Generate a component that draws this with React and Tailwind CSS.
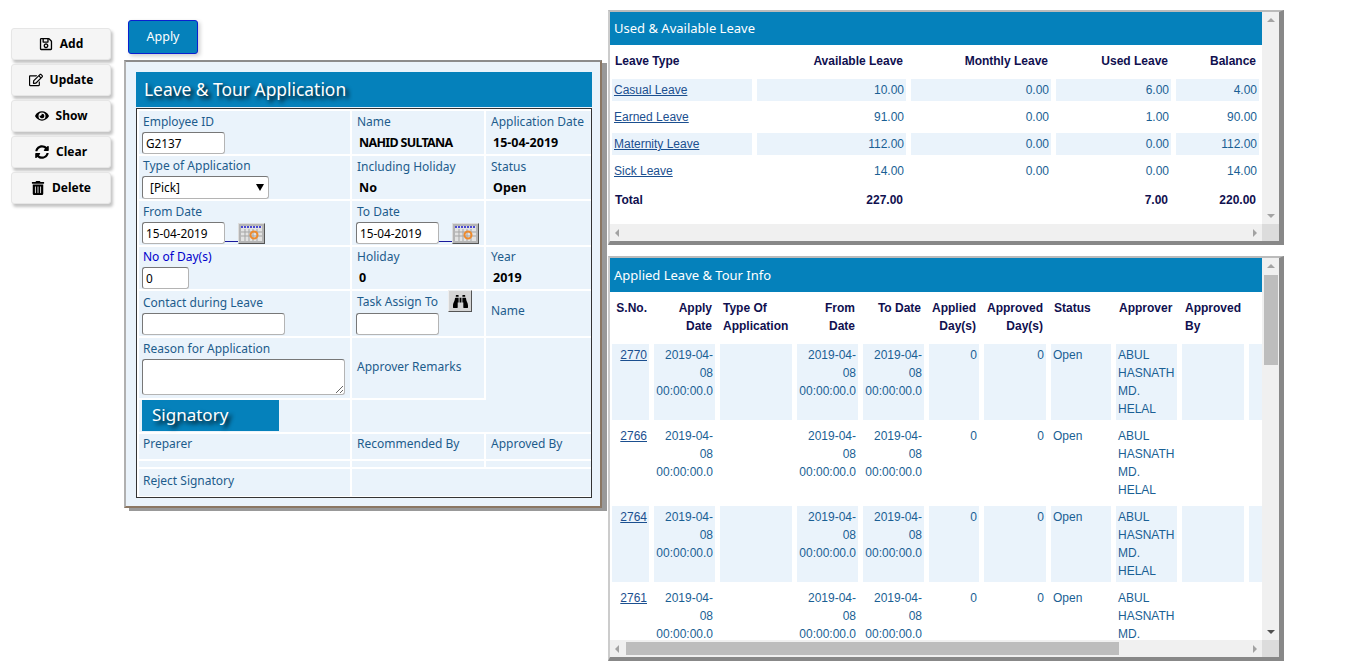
import { FaBinoculars, FaEye, FaRegEdit, FaRegSave, FaSyncAlt, FaTrashAlt } from "react-icons/fa";

const segoe = "font-['Noto_Sans',sans-serif]";

const actions = [
  { label: "Add", icon: FaRegSave },
  { label: "Update", icon: FaRegEdit },
  { label: "Show", icon: FaEye },
  { label: "Clear", icon: FaSyncAlt },
  { label: "Delete", icon: FaTrashAlt },
];

const leaveRows = [
  ["Casual Leave", "10.00", "0.00", "6.00", "4.00"],
  ["Earned Leave", "91.00", "0.00", "1.00", "90.00"],
  ["Maternity Leave", "112.00", "0.00", "0.00", "112.00"],
  ["Sick Leave", "14.00", "0.00", "0.00", "14.00"],
];

// last row runs under the scrollbar, its final word is out of view
const appliedRows = [
  ["2770", "ABUL HASNATH MD. HELAL"],
  ["2766", "ABUL HASNATH MD. HELAL"],
  ["2764", "ABUL HASNATH MD. HELAL"],
  ["2761", "ABUL HASNATH MD."],
];
const stamp = "2019-04-08 00:00:00.0";

function Label({ children, className = "" }) {
  return <div className={`ml-px h-[20px] leading-[20px] text-[12px] whitespace-nowrap text-[#1d5c8c] ${className}`}>{children}</div>;
}

function Value({ children, className = "" }) {
  return <div className={`ml-[3px] h-[20px] leading-[20px] text-[12.5px] font-bold whitespace-nowrap text-black ${className}`}>{children}</div>;
}

function TextBox({ value = "", className = "" }) {
  return (
    <input
      readOnly
      value={value}
      className={`block h-[22px] rounded-[3px] border border-[#b4b4b4] border-t-[#777] border-l-[#777] bg-white px-[3px] font-['Noto_Sans',sans-serif] text-[11.8px] text-black outline-none ${className}`}
    />
  );
}

function DateField() {
  return (
    <div className="flex items-end">
      <TextBox value="15-04-2019" className="w-[83px]" />
      <div className="mb-[2px] h-px w-[13px] bg-[#1a1a9c]" />
      <div className="flex h-[21px] w-[27px] items-center justify-center border border-[#555] border-t-[#ddd] border-l-[#ddd] bg-[#b5b5b5]">
        <svg width="21" height="15" viewBox="0 0 21 15">
          <rect width="21" height="15" fill="#e2e2e2" />
          <path d="M0 1h21" stroke="#4a4ad0" strokeWidth="2" strokeDasharray="2 1" />
          <path d="M4 3v12M8 3v12M12 3v12M16 3v12M0 6h21M0 10h21" stroke="#a5a5a5" strokeWidth="1" />
          <circle cx="13" cy="9" r="3.5" fill="none" stroke="#ee8a2c" strokeWidth="2" />
        </svg>
      </div>
    </div>
  );
}

function Thumb({ className }) {
  return <div className={`shrink-0 bg-[#bdbdbd] ${className}`} />;
}

function ArrowUp() {
  return <div className="h-0 w-0 border-x-[4px] border-b-[4px] border-x-transparent border-b-[#a3a3a3]" />;
}

function ArrowDown({ dark }) {
  return <div className={`h-0 w-0 border-x-[4px] border-t-[4px] border-x-transparent ${dark ? "border-t-[#505050]" : "border-t-[#a3a3a3]"}`} />;
}

function ArrowLeft() {
  return <div className="h-0 w-0 border-y-[4px] border-r-[4px] border-y-transparent border-r-[#a3a3a3]" />;
}

function ArrowRight() {
  return <div className="h-0 w-0 border-y-[4px] border-l-[4px] border-y-transparent border-l-[#a3a3a3]" />;
}

function LeaveForm() {
  const tdFirst = "border-2 border-white p-0 pl-[3px] align-top";
  const td = "border-2 border-white p-0 pl-[4px] align-top";
  return (
    <div className={`${segoe} h-[448px] w-[478px] border-t-2 border-l-2 border-r-2 border-b-2 border-t-[#8c8c8c] border-r-[#8b7763] border-b-[#8b7763] border-l-[#b0b0b0] bg-[#eaf3fb] pt-[10px] pr-[8px] pl-[10px] shadow-[5px_3px_0_#999]`}>
      <div className="flex h-[35px] items-center bg-[#0581bb] pb-px pl-[8px] text-[17.4px] text-white [text-shadow:3px_3px_4px_#000]">
        Leave &amp; Tour Application
      </div>
      <div className="mt-px h-[390px] overflow-hidden border border-[#333]">
        <table className="w-[454px] table-fixed border-collapse">
          <colgroup>
            <col className="w-[213px]" />
            <col className="w-[134px]" />
            <col className="w-[107px]" />
          </colgroup>
          <tbody>
            <tr className="h-[45px]">
              <td className={tdFirst}>
                <Label className="mt-px">Employee ID</Label>
                <TextBox value="G2137" className="w-[83px]" />
              </td>
              <td className={td}>
                <Label className="mt-px">Name</Label>
                <Value className="mt-px tracking-[-0.7px]">NAHID SULTANA</Value>
              </td>
              <td className={td}>
                <Label className="mt-px">Application Date</Label>
                <Value className="mt-px">15-04-2019</Value>
              </td>
            </tr>
            <tr className="h-[45px]">
              <td className={tdFirst}>
                <Label>Type of Application</Label>
                <div className="relative w-[127px]">
                  <select className="block h-[23px] w-full appearance-none rounded-[3px] border border-[#b4b4b4] border-t-[#777] border-l-[#777] bg-white pl-[7px] font-['Noto_Sans',sans-serif] text-[11.8px] text-black">
                    <option>[Pick]</option>
                  </select>
                  <div className="absolute top-[8px] right-[5px] h-0 w-0 border-x-[4px] border-t-[7px] border-x-transparent border-t-black" />
                </div>
              </td>
              <td className={td}>
                <Label className="mt-px">Including Holiday</Label>
                <Value className="mt-px">No</Value>
              </td>
              <td className={td}>
                <Label className="mt-px">Status</Label>
                <Value className="mt-px">Open</Value>
              </td>
            </tr>
            <tr className="h-[46px]">
              <td className={tdFirst}>
                <Label className="mt-px">From Date</Label>
                <DateField />
              </td>
              <td className={td}>
                <Label className="mt-px">To Date</Label>
                <DateField />
              </td>
              <td className={td} />
            </tr>
            <tr className="h-[44px]">
              <td className={tdFirst}>
                <Label className="!text-[#0000cc]">No of Day(s)</Label>
                <TextBox value="0" className="w-[47px]" />
              </td>
              <td className={td}>
                <Label>Holiday</Label>
                <Value className="mt-px">0</Value>
              </td>
              <td className={td}>
                <Label>Year</Label>
                <Value className="mt-px">2019</Value>
              </td>
            </tr>
            <tr className="h-[47px]">
              <td className={tdFirst}>
                <Label className="mt-[2px]">Contact during Leave</Label>
                <TextBox className="w-[143px]" />
              </td>
              <td className={td}>
                <div className="flex items-start justify-between pr-[12px]">
                  <Label className="mt-px">Task Assign To</Label>
                  <div className="-mt-px flex h-[22px] w-[24px] items-center justify-center border border-[#555] border-t-[#eee] border-l-[#eee] bg-[#d4d4d4]">
                    <FaBinoculars className="text-[15px] text-black" />
                  </div>
                </div>
                <TextBox className="mt-px w-[83px]" />
              </td>
              <td className={`${td} pt-[10px]`}>
                <Label>Name</Label>
              </td>
            </tr>
            <tr className="h-[62px]">
              <td className={tdFirst}>
                <Label className="mt-px">Reason for Application</Label>
                <textarea
                  readOnly
                  className="block h-[36px] w-[203px] rounded-[3px] border border-[#b4b4b4] border-t-[#777] border-l-[#777] bg-white"
                />
              </td>
              <td className={`${td} pt-[19px]`}>
                <Label>Approver Remarks</Label>
              </td>
              <td className="border-2 border-b-0 border-white p-0" />
            </tr>
            <tr className="h-[34px]">
              <td className={tdFirst}>
                <div className="flex h-[31px] w-[137px] items-center bg-[#0581bb] pb-[2px] pl-[10px] text-[17px] text-white [text-shadow:3px_3px_4px_#000]">
                  Signatory
                </div>
              </td>
              <td className="border-2 border-r-0 border-white p-0" />
              <td className="border-r-2 border-b-2 border-white p-0" />
            </tr>
            <tr className="h-[27px]">
              <td className={tdFirst}>
                <Label>Preparer</Label>
              </td>
              <td className={td}>
                <Label>Recommended By</Label>
              </td>
              <td className={td}>
                <Label>Approved By</Label>
              </td>
            </tr>
            <tr className="h-[8px]">
              <td className="border-2 border-white p-0" />
              <td className="border-2 border-white p-0" />
              <td className="border-2 border-white p-0" />
            </tr>
            <tr className="h-[29px]">
              <td className={tdFirst}>
                <Label className="mt-[2px]">Reject Signatory</Label>
              </td>
              <td className="border-2 border-white p-0" colSpan={2} />
            </tr>
          </tbody>
        </table>
      </div>
    </div>
  );
}

function UsedLeave() {
  const cols = "grid grid-cols-[140px_149px_140px_115px_83px] gap-x-[5px] pl-[2px]";
  const heads = ["Available Leave", "Monthly Leave", "Used Leave", "Balance"];
  return (
    <div className="flex h-[235px] w-[676px] flex-col border-t-2 border-r-[5px] border-b-[4px] border-l-2 border-t-[#bbb] border-r-[#888] border-b-[#888] border-l-[#ccc] bg-white font-['Liberation_Sans',sans-serif] text-[12px]">
      <div className="flex min-h-0 flex-1">
        <div className="w-[652px] overflow-hidden">
          <div className={`${segoe} flex h-[33px] items-center bg-[#0581bb] pl-[4px] text-[13px] text-white`}>Used &amp; Available Leave</div>
          <div className={`${cols} h-[34px] items-center pb-[2px] font-bold text-[#10104f]`}>
            <div className="pl-[3px]">Leave Type</div>
            {heads.map((h) => (
              <div key={h} className="pr-[3px] text-right">{h}</div>
            ))}
          </div>
          <div className="flex flex-col gap-y-[5px]">
            {leaveRows.map((row, i) => (
              <div key={row[0]} className={`${cols} h-[22px] leading-[22px] text-[#1a5f94]`}>
                {row.map((v, j) => (
                  <div key={j} className={`${i % 2 === 0 ? "bg-[#eaf3fb]" : ""} ${j === 0 ? "pl-[2px]" : "pr-[2px] text-right"}`}>
                    {j === 0 ? <a href="#" className="text-[#1b4f8f] underline">{v}</a> : v}
                  </div>
                ))}
              </div>
            ))}
          </div>
          <div className={`${cols} mt-[5px] h-[25px] items-center font-bold text-[#10104f]`}>
            <div className="pl-[3px]">Total</div>
            <div className="pr-[3px] text-right">227.00</div>
            <div />
            <div className="pr-[3px] text-right">7.00</div>
            <div className="pr-[3px] text-right">220.00</div>
          </div>
        </div>
        <div className="flex w-[17px] shrink-0 flex-col items-center justify-between bg-[#f0f0f0] py-[6px]">
          <ArrowUp />
          <ArrowDown />
        </div>
      </div>
      <div className="flex h-[17px] shrink-0">
        <div className="flex flex-1 items-center justify-between bg-[#f0f0f0] px-[5px]">
          <ArrowLeft />
          <ArrowRight />
        </div>
        <div className="w-[17px] bg-[#dcdcdc]" />
      </div>
    </div>
  );
}

function AppliedLeave() {
  const cols = "grid grid-cols-[37px_61px_72px_61px_61px_50px_62px_60px_61px_62px_60px] gap-x-[5px] pl-[2px]";
  return (
    <div className="flex h-[405px] w-[676px] flex-col border-t-2 border-r-[5px] border-b-[4px] border-l-2 border-t-[#bbb] border-r-[#888] border-b-[#888] border-l-[#ccc] bg-white font-['Liberation_Sans',sans-serif] text-[12px] leading-[18px]">
      <div className="flex min-h-0 flex-1">
        <div className="w-[652px] overflow-hidden">
          <div className={`${segoe} flex h-[34px] items-center bg-[#0581bb] pl-[4px] text-[13px] text-white`}>Applied Leave &amp; Tour Info</div>
          <div className={`${cols} h-[52px] w-[760px] pt-[7px] font-bold text-[#10104f]`}>
            <div className="pr-[2px] text-right">S.No.</div>
            <div className="pr-[3px] text-right">Apply Date</div>
            <div className="pl-[3px]">Type Of Application</div>
            <div className="pr-[3px] text-right">From Date</div>
            <div className="pr-[3px] text-right">To Date</div>
            <div className="pr-[3px] text-right">Applied Day(s)</div>
            <div className="pr-[3px] text-right">Approved Day(s)</div>
            <div className="pl-[3px]">Status</div>
            <div className="pl-[3px]">Approver</div>
            <div className="pl-[3px]">Approved By</div>
            <div />
          </div>
          <div className="flex w-[760px] flex-col gap-y-[5px] text-[#1a5f94]">
            {appliedRows.map(([id, approver], i) => {
              const bg = i % 2 === 0 ? "bg-[#eaf3fb]" : "";
              return (
                <div key={id} className={`${cols} h-[76px] shrink-0`}>
                  <div className={`${bg} pt-[2px] pr-[2px] text-right`}>
                    <a href="#" className="text-[#1b4f8f] underline">{id}</a>
                  </div>
                  <div className={`${bg} pt-[2px] pr-[2px] text-right`}>{stamp}</div>
                  <div className={bg} />
                  <div className={`${bg} pt-[2px] pr-[2px] text-right`}>{stamp}</div>
                  <div className={`${bg} pt-[2px] pr-[2px] text-right`}>{stamp}</div>
                  <div className={`${bg} pt-[2px] pr-[2px] text-right`}>0</div>
                  <div className={`${bg} pt-[2px] pr-[2px] text-right`}>0</div>
                  <div className={`${bg} pt-[2px] pl-[2px]`}>Open</div>
                  <div className={`${bg} pt-[2px] pl-[2px]`}>{approver}</div>
                  <div className={bg} />
                  <div className={bg} />
                </div>
              );
            })}
          </div>
        </div>
        <div className="flex w-[17px] shrink-0 flex-col items-center bg-[#f0f0f0] py-[6px]">
          <ArrowUp />
          <Thumb className="mt-[7px] h-[90px] w-[14px]" />
          <div className="flex-1" />
          <ArrowDown dark />
        </div>
      </div>
      <div className="flex h-[17px] shrink-0">
        <div className="flex flex-1 items-center bg-[#f0f0f0] px-[5px]">
          <ArrowLeft />
          <Thumb className="ml-[7px] h-[13px] w-[493px]" />
          <div className="flex-1" />
          <ArrowRight />
        </div>
        <div className="w-[17px] bg-[#dcdcdc]" />
      </div>
    </div>
  );
}

export default function App() {
  return (
    <div className="flex h-[667px] w-[1361px] overflow-hidden bg-white">
      {/* LEFT */}
      <div className={`${segoe} flex w-[124px] shrink-0 flex-col gap-[4px] pt-[28px] pl-[11px]`}>
        {actions.map(({ label, icon: Icon }) => (
          <button
            key={label}
            className="flex h-[32px] w-[100px] items-center justify-center gap-[7px] rounded-[3px] border border-[#e6e6e6] bg-[#f5f5f5] text-[12px] font-bold text-black shadow-[2px_3px_3px_#c4c4c4]"
          >
            <Icon className="text-[14px]" />
            {label}
          </button>
        ))}
      </div>

      {/* FORM */}
      <div className="w-[484px] shrink-0 pt-[20px]">
        <button className={`${segoe} ml-[4px] block h-[34px] w-[70px] rounded-[3px] border border-[#0a1fd0] bg-[#0581bb] text-[12.5px] text-white shadow-[2px_2px_4px_#ccc]`}>
          Apply
        </button>
        <div className="mt-[6px]">
          <LeaveForm />
        </div>
      </div>

      {/* RIGHT */}
      <div className="flex flex-col gap-[11px] pt-[10px]">
        <UsedLeave />
        <AppliedLeave />
      </div>
    </div>
  );
}
